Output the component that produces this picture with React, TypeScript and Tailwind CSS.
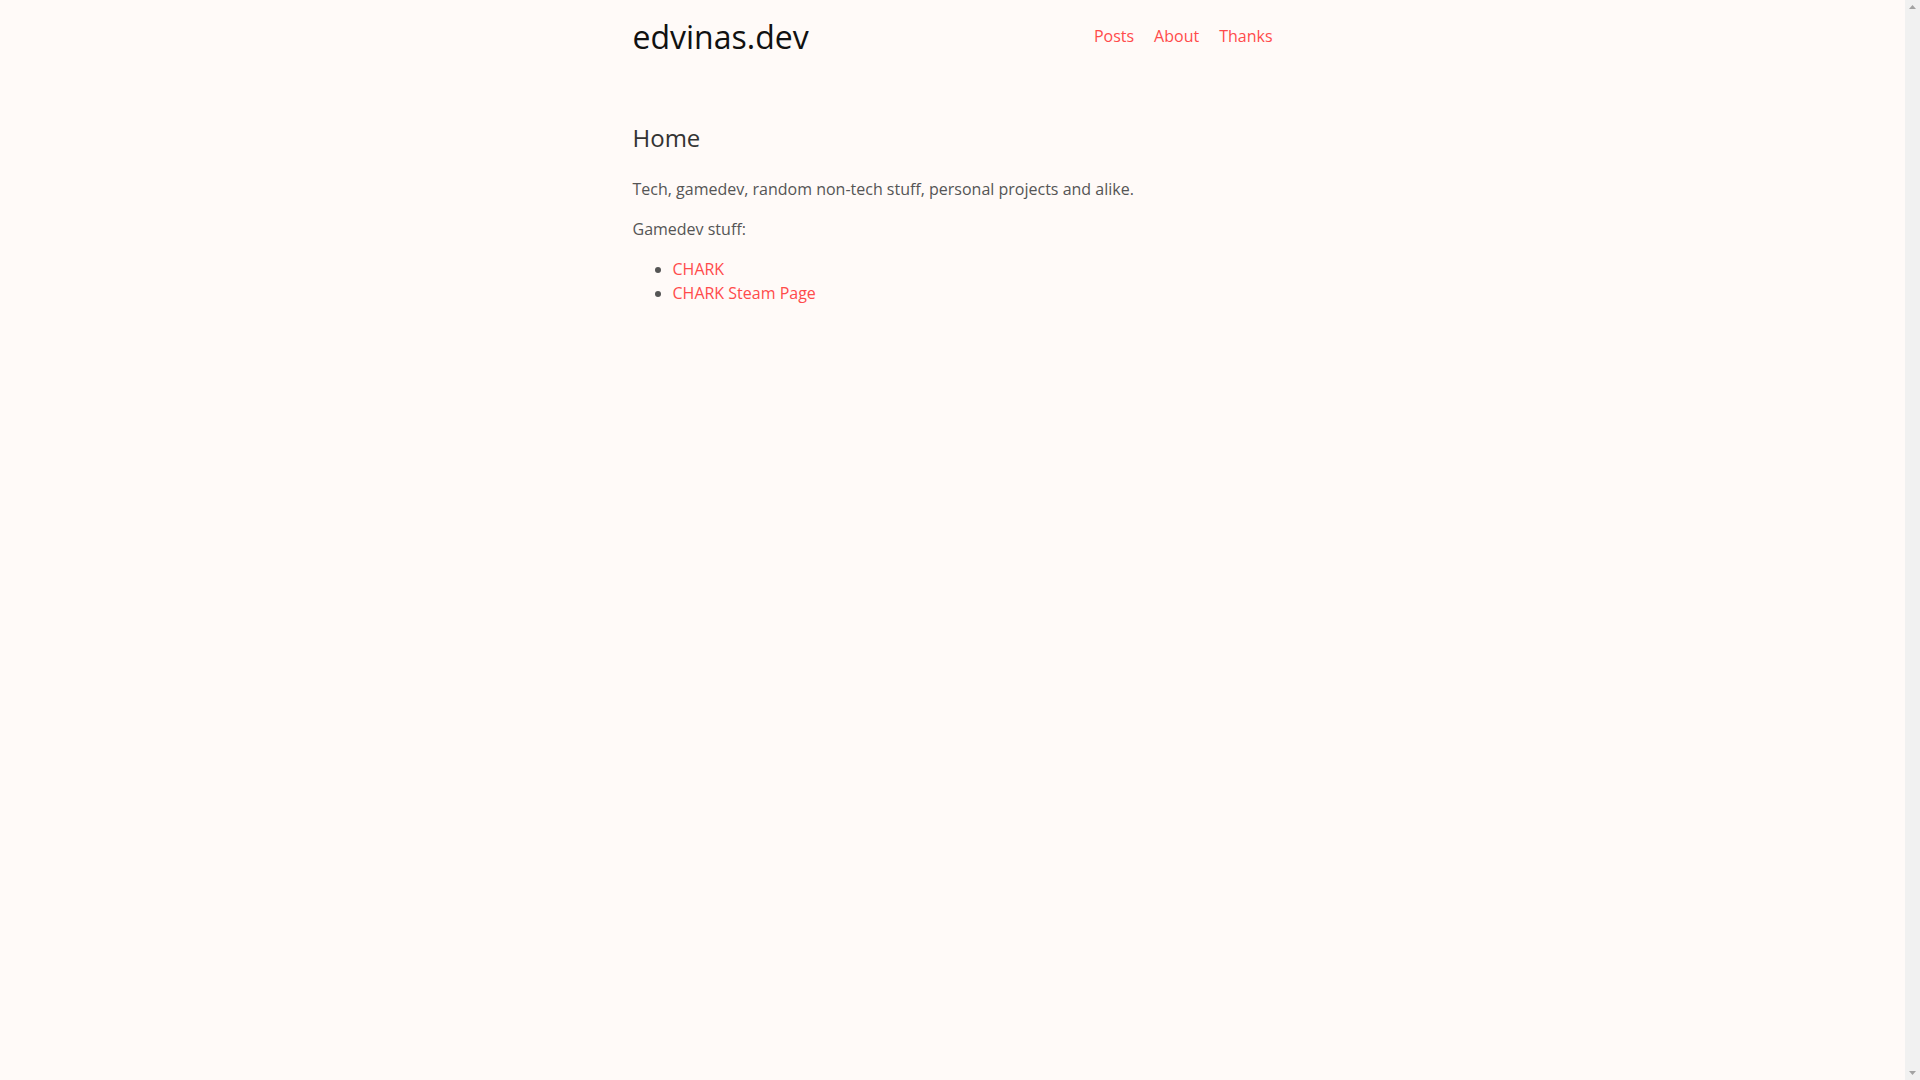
import React from "react";

export default function App() {
  return (
    <div
      className="flex h-screen bg-[#fffaf8] text-[#555] text-[16px] leading-[24px]"
      style={{ fontFamily: '"Open Sans", "Noto Sans", sans-serif' }}
    >
      <div className="flex-1 overflow-hidden">
        <div className="mx-auto w-[640px]">
          <header className="flex justify-between items-start pt-[13px]">
            <a href="#" className="text-[32px] leading-[48px] text-[#111]">
              edvinas.dev
            </a>
            <nav className="flex gap-[20px] mt-[11px] text-[#ff4b4b]">
              <a href="#">Posts</a>
              <a href="#">About</a>
              <a href="#">Thanks</a>
            </nav>
          </header>
          <main>
            <h2 className="mt-[59px] text-[24px] leading-[36px] text-[#333] font-normal">Home</h2>
            <p className="mt-[21px]">Tech, gamedev, random non-tech stuff, personal projects and alike.</p>
            <p className="mt-[16px]">Gamedev stuff:</p>
            <ul className="mt-[16px] list-disc pl-[40px] marker:text-[#555]">
              <li>
                <a href="#" className="text-[#ff4b4b]">CHARK</a>
              </li>
              <li>
                <a href="#" className="text-[#ff4b4b]">CHARK Steam Page</a>
              </li>
            </ul>
          </main>
        </div>
      </div>
      <div className="w-[15px] bg-[#f1f1f1] flex flex-col justify-between items-center py-[5px]">
        <svg width="7" height="4" viewBox="0 0 7 4">
          <polygon points="3.5,0 7,4 0,4" fill="#a3a3a3" />
        </svg>
        <svg width="7" height="4" viewBox="0 0 7 4">
          <polygon points="0,0 7,0 3.5,4" fill="#a3a3a3" />
        </svg>
      </div>
    </div>
  );
}
